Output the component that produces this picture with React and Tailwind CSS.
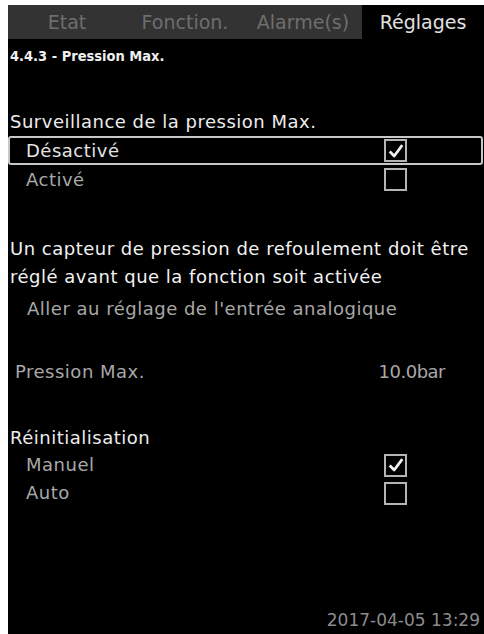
const font = { fontFamily: '"DejaVu Sans", sans-serif' };

function Check({ checked }) {
  return (
    <div className="flex h-[23px] w-[23px] items-center justify-center border-2 border-[#b5b5b5]">
      {checked && (
        <svg viewBox="0 0 20 20" className="h-[18px] w-[18px]">
          <path d="M3 10.5 L8 15.5 L17 3.5" fill="none" stroke="#f2f2f2" strokeWidth="3" strokeLinejoin="round" />
        </svg>
      )}
    </div>
  );
}

function OptionRow({ label, checked, selected, tall }) {
  return (
    <div
      className={
        'flex items-center justify-between pl-[16px] pr-[74px] ' +
        (tall ? 'h-[29px] ' : 'h-[28px] ') +
        (selected ? 'rounded-[3px] border-2 border-[#c8c8c8] text-[#e4e4e4]' : 'border-2 border-transparent text-[#a8a8a8]')
      }
    >
      <span>{label}</span>
      <Check checked={checked} />
    </div>
  );
}

const tabs = ['Etat', 'Fonction.', 'Alarme(s)'];

export default function App() {
  return (
    <div className="h-[634px] w-[484px] bg-white pl-[8px] pt-[5px]" style={font}>
      <div className="flex h-[629px] flex-col bg-black text-[18px] leading-[28px] tracking-[0.5px] text-[#ececec]">
        <div className="flex h-[34px] bg-[#333333] tracking-normal">
          {tabs.map((t) => (
            <div key={t} className="flex w-[118px] items-center justify-center text-[19px] text-[#6e6e6e]">
              {t}
            </div>
          ))}
          <div className="flex flex-1 items-center justify-center bg-black text-[19px] text-[#e0e0e0]">Réglages</div>
        </div>
        <div
          className="px-[2px] pt-[8px] text-[14.5px] font-bold leading-[18px] tracking-normal text-[#f0f0f0]"
          style={{ fontFamily: '"DejaVu Sans Condensed", "DejaVu Sans", sans-serif' }}
        >
          4.4.3 - Pression Max.
        </div>

        <div className="mt-[43px] px-[2px]">Surveillance de la pression Max.</div>
        <div className="pr-[1px]">
          <OptionRow label="Désactivé" checked selected tall />
          <OptionRow label="Activé" tall />
        </div>

        <div className="mt-[41px] px-[2px] text-[#f2f2f2]">
          Un capteur de pression de refoulement doit être
          <br />
          réglé avant que la fonction soit activée
        </div>
        <div className="pl-[19px] pt-[4px] text-[#a8a8a8]">Aller au réglage de l'entrée analogique</div>

        <div className="mt-[35px] flex justify-between pl-[7px] pr-[39px] text-[#a8a8a8]">
          <span>Pression Max.</span>
          <span className="tracking-[-0.5px]">10.0bar</span>
        </div>

        <div className="mt-[38px] px-[2px]">Réinitialisation</div>
        <div className="-mt-[1px] pr-[1px]">
          <OptionRow label="Manuel" checked />
          <OptionRow label="Auto" />
        </div>

        <div className="mt-auto pr-[4px] text-right text-[17px] tracking-normal text-[#8c8c8c]">2017-04-05 13:29</div>
      </div>
    </div>
  );
}
